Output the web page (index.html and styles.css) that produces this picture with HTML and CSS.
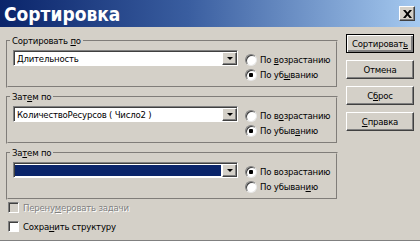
FILE: index.html
```html
<!DOCTYPE html>
<html lang="ru">
<head>
    <meta charset="UTF-8">
    <title>Сортировка</title>
    <link rel="stylesheet" href="styles.css">
</head>
<body>
    <div class="window">
        <div class="titlebar">
            <span class="title">Сортировка</span>
            <span class="close">
                <svg width="9" height="8" viewBox="0 0 9 8">
                    <path d="M0 0h2.4l2.1 2.6L6.6 0H9L5.7 4 9 8H6.6L4.5 5.4 2.4 8H0l3.3-4z" fill="#000"/>
                </svg>
            </span>
        </div>
        <div class="content">
            <div class="main">
                <fieldset class="group">
                    <legend>Сортировать <u>п</u>о</legend>
                    <div class="group-row">
                        <div class="combo">
                            <span class="combo-text">Длительность</span>
                            <span class="combo-btn"><span class="arrow"></span></span>
                        </div>
                        <div class="radios">
                            <div class="radio"><span class="circle"></span><span>По <u>в</u>озрастанию</span></div>
                            <div class="radio"><span class="circle checked"></span><span>По уб<u>ы</u>ванию</span></div>
                        </div>
                    </div>
                </fieldset>

                <fieldset class="group">
                    <legend>Зат<u>е</u>м по</legend>
                    <div class="group-row">
                        <div class="combo">
                            <span class="combo-text">КоличествоРесурсов ( Число2 )</span>
                            <span class="combo-btn"><span class="arrow"></span></span>
                        </div>
                        <div class="radios">
                            <div class="radio"><span class="circle"></span><span>По в<u>о</u>зрастанию</span></div>
                            <div class="radio"><span class="circle checked"></span><span>По убыв<u>а</u>нию</span></div>
                        </div>
                    </div>
                </fieldset>

                <fieldset class="group">
                    <legend>За<u>т</u>ем по</legend>
                    <div class="group-row">
                        <div class="combo">
                            <span class="combo-text selected"></span>
                            <span class="combo-btn"><span class="arrow"></span></span>
                        </div>
                        <div class="radios">
                            <div class="radio"><span class="circle checked"></span><span>По возрастанию</span></div>
                            <div class="radio"><span class="circle"></span><span>По убыван<u>и</u>ю</span></div>
                        </div>
                    </div>
                </fieldset>

                <div class="checks">
                    <div class="check disabled"><span class="box"></span><span>Перену<u>м</u>еровать задачи</span></div>
                    <div class="check"><span class="box"></span><span>Сохра<u>н</u>ить структуру</span></div>
                </div>
            </div>

            <div class="buttons">
                <button class="btn default">Сортироват<u>ь</u></button>
                <button class="btn">Отмена</button>
                <button class="btn">С<u>б</u>рос</button>
                <button class="btn"><u>С</u>правка</button>
            </div>
        </div>
    </div>
</body>
</html>
```

FILE: styles.css
```css
body {
    margin: 0;
    padding: 0;
    background-color: #d4d0c8;
    font-family: "DejaVu Sans Condensed", "Liberation Sans", sans-serif;
    font-size: 9.5px;
    letter-spacing: -0.2px;
    color: #000;
}
.window {
    width: 420px;
    height: 241px;
    box-sizing: border-box;
    border-bottom: 1px solid #808080;
    background-color: #d4d0c8;
}
.titlebar {
    height: 27px;
    display: flex;
    align-items: center;
    justify-content: space-between;
    padding: 0 5px 0 4px;
    background: linear-gradient(to right, #0a246a, #3a5ea0 45%, #a6caf0);
}
.title {
    color: #fff;
    font-weight: bold;
    font-size: 19px;
    letter-spacing: 0;
}
.close {
    width: 16px;
    height: 15px;
    box-sizing: border-box;
    display: flex;
    align-items: center;
    justify-content: center;
    background: #d4d0c8;
    border: 1px solid;
    border-color: #fff #404040 #404040 #fff;
    box-shadow: inset -1px -1px #808080;
}
.content {
    display: flex;
    padding: 6px 6px 0 6px;
    gap: 8px;
}
.main {
    width: 332px;
    flex: none;
}
.group {
    margin: 1px 0 0 0;
    padding: 3px 5px 4px 5px;
    border: 2px groove #d4d0c8;
    min-width: 0;
}
.group + .group {
    margin-top: 2px;
}
.group legend {
    margin-left: -3px;
    padding: 0 2px;
    line-height: 13px;
}
.group-row {
    display: flex;
    align-items: flex-start;
    gap: 7px;
}
.combo {
    width: 225px;
    height: 16px;
    flex: none;
    box-sizing: border-box;
    display: flex;
    background: #fff;
    border: 1px solid;
    border-color: #808080 #fff #fff #808080;
    box-shadow: inset 1px 1px #404040;
    padding: 1px 0 0 1px;
}
.combo-text {
    flex: 1;
    padding-left: 2px;
    line-height: 13px;
    white-space: nowrap;
}
.combo-text.selected {
    background: #0a246a;
    margin: 1px 1px 1px 0;
}
.combo-btn {
    width: 15px;
    height: 13px;
    box-sizing: border-box;
    display: flex;
    align-items: center;
    justify-content: center;
    background: #d4d0c8;
    border: 1px solid;
    border-color: #fff #404040 #404040 #fff;
    box-shadow: inset -1px -1px #808080;
}
.arrow {
    width: 0;
    height: 0;
    border-left: 3px solid transparent;
    border-right: 3px solid transparent;
    border-top: 3px solid #000;
}
.radios {
    margin-top: 2px;
    flex: none;
}
.radio {
    display: flex;
    align-items: center;
    height: 15px;
    gap: 3px;
    white-space: nowrap;
}
.circle {
    width: 12px;
    height: 12px;
    flex: none;
    box-sizing: border-box;
    border-radius: 50%;
    background: #fff;
    border: 1px solid;
    border-color: #808080 #e8e8e8 #e8e8e8 #808080;
    box-shadow: inset 1px 1px #404040;
}
.circle.checked {
    background: radial-gradient(circle, #000 2px, #fff 2.5px);
}
.checks {
    margin-top: 0;
}
.check {
    display: flex;
    align-items: center;
    height: 15px;
    gap: 4px;
    padding-left: 2px;
    white-space: nowrap;
}
.check + .check {
    margin-top: 4px;
}
.box {
    width: 11px;
    height: 11px;
    flex: none;
    box-sizing: border-box;
    background: #fff;
    border: 1px solid;
    border-color: #808080 #fff #fff #808080;
    box-shadow: inset 1px 1px #404040;
}
.check.disabled {
    color: #808080;
    text-shadow: 1px 1px #fff;
}
.check.disabled .box {
    background: #d4d0c8;
}
.buttons {
    display: flex;
    flex-direction: column;
    gap: 7px;
    padding-top: 1px;
}
.btn {
    width: 68px;
    height: 19px;
    padding: 0;
    font-family: inherit;
    font-size: 9.5px;
    letter-spacing: -0.2px;
    color: #000;
    white-space: nowrap;
    background: #d4d0c8;
    border: 1px solid;
    border-color: #fff #404040 #404040 #fff;
    box-shadow: inset -1px -1px #808080;
}
.btn.default {
    border: 1px solid #000;
    box-shadow: inset 1px 1px #fff, inset -2px -2px #808080;
}
```
